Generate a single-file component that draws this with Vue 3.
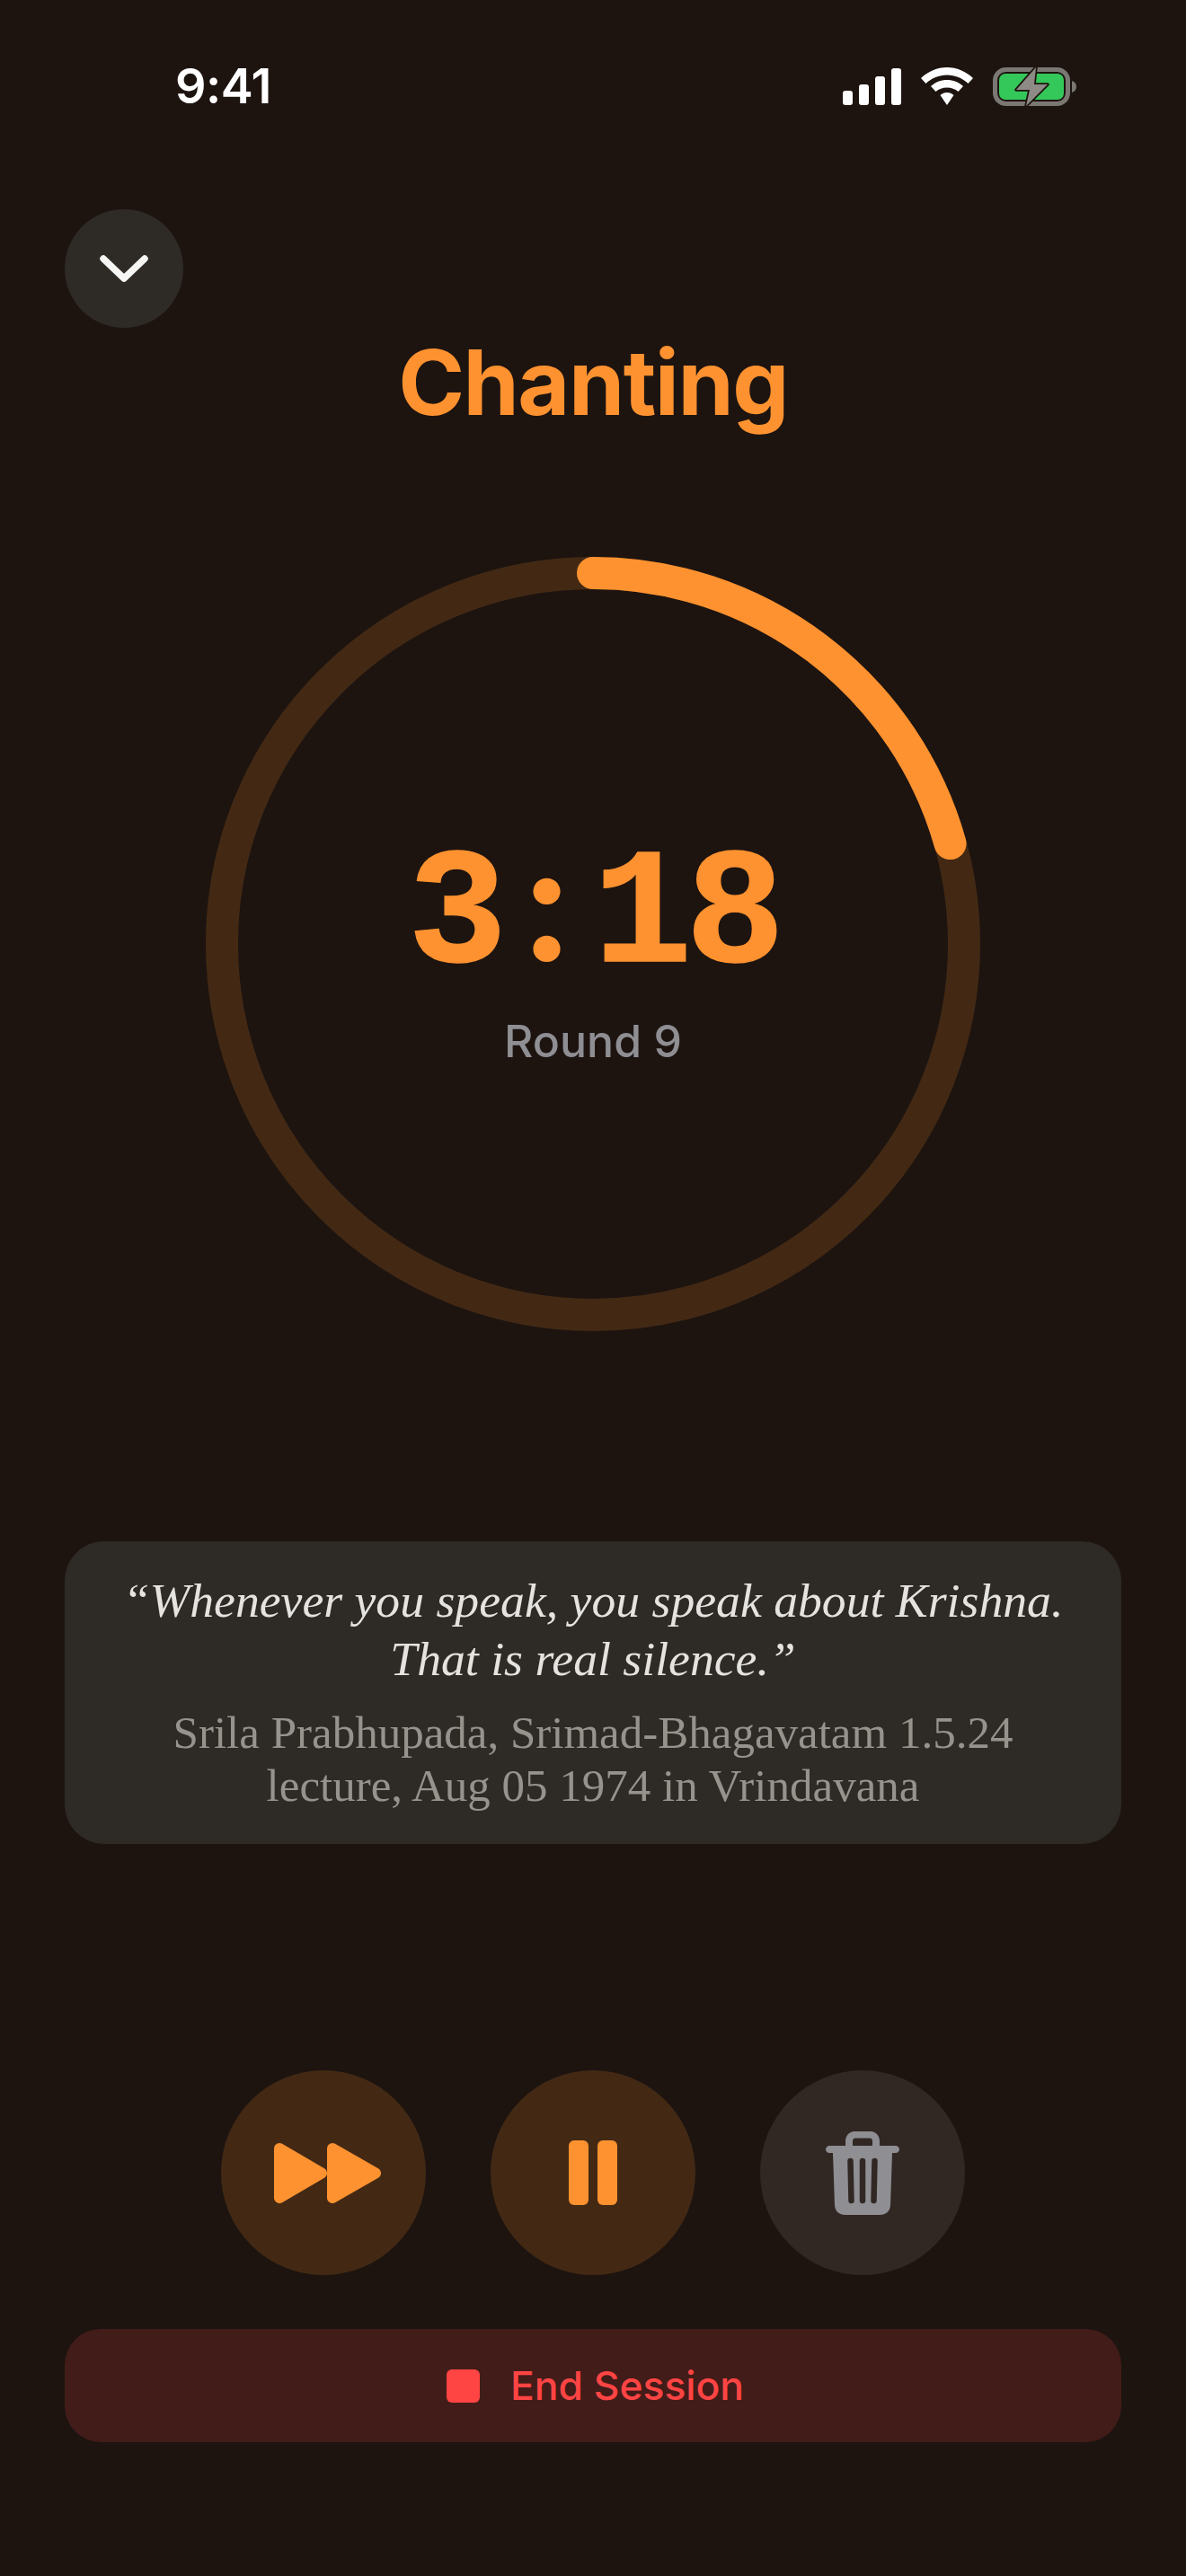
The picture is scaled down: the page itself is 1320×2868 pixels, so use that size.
<script setup>
const quote = ['“Whenever you speak, you speak about Krishna.', 'That is real silence.”']
const source = ['Srila Prabhupada, Srimad-Bhagavatam 1.5.24', 'lecture, Aug 05 1974 in Vrindavana']
const radius = 413
const circumference = 2 * Math.PI * radius
const progress = 198 / 960
const dash = `${circumference * progress} ${circumference}`
</script>

<template>
  <div class="screen">
    <div class="status">
      <span class="time">9:41</span>
      <div class="status-icons">
        <div class="signal"><i class="b1"></i><i class="b2"></i><i class="b3"></i><i class="b4"></i></div>
        <svg class="wifi" width="58" height="42" viewBox="0 0 58 42">
          <path d="M29 0C18 0 8 4.500 0 12L5.500 18C12 12 20 8.500 29 8.500S46 12 52.500 18L58 12C50 4.500 40 0 29 0Z" fill="#fff"/>
          <path d="M29 14C22 14 16 16.500 11 21L16.500 27C20 24 24 22.500 29 22.500S38 24 41.500 27L47 21C42 16.500 36 14 29 14Z" fill="#fff"/>
          <path d="M29 28C26 28 23.500 29 21.500 31L29 42L36.500 31C34.500 29 32 28 29 28Z" fill="#fff"/>
        </svg>
        <svg class="battery" width="93" height="45" viewBox="0 0 93 45">
          <rect x="2.500" y="3.500" width="81" height="38" rx="12" fill="none" stroke="#7b7772" stroke-width="5"/>
          <rect x="7" y="8" width="72" height="29" rx="7" fill="#34c759"/>
          <path d="M88 16c3 1 5 3 5 6.500s-2 5.500-5 6.500Z" fill="#7b7772"/>
          <path d="M48 1 26 26H41L37 44 61 20H46Z" fill="#8e8a85" stroke="#1d1410" stroke-width="3.500" stroke-linejoin="round" paint-order="stroke"/>
        </svg>
      </div>
    </div>

    <button class="back" type="button" aria-label="Close">
      <svg width="56" height="34" viewBox="0 0 56 34"><path d="M5 6 28 28 51 6" fill="none" stroke="#f5f5f3" stroke-width="7.500" stroke-linecap="round" stroke-linejoin="round"/></svg>
    </button>

    <h1 class="title">Chanting</h1>

    <div class="ring">
      <svg width="862" height="862" viewBox="0 0 862 862">
        <circle cx="431" cy="431" :r="radius" fill="none" stroke="#432914" stroke-width="36"/>
        <circle cx="431" cy="431" :r="radius" fill="none" stroke="#ff9230" stroke-width="36" stroke-linecap="round" :stroke-dasharray="dash" transform="rotate(-90 431 431)"/>
      </svg>
      <div class="ring-text">
        <div class="clock">3<span class="colon">:</span>18</div>
        <div class="round">Round 9</div>
      </div>
    </div>

    <div class="card">
      <p class="quote"><span v-for="l in quote" :key="l">{{ l }}</span></p>
      <p class="source"><span v-for="l in source" :key="l">{{ l }}</span></p>
    </div>

    <div class="controls">
      <button class="ctrl warm" type="button" aria-label="Skip">
        <svg class="skip" width="119" height="67" viewBox="0 0 119 67">
          <path d="M6 6 53 33.500 6 61Z" fill="#ff9230" stroke="#ff9230" stroke-width="12" stroke-linejoin="round"/>
          <path d="M65 6 113 33.500 65 61Z" fill="#ff9230" stroke="#ff9230" stroke-width="12" stroke-linejoin="round"/>
        </svg>
      </button>
      <button class="ctrl warm" type="button" aria-label="Pause">
        <svg width="54" height="72" viewBox="0 0 54 72">
          <rect x="0" y="0" width="22" height="72" rx="6" fill="#ff9230"/>
          <rect x="32" y="0" width="22" height="72" rx="6" fill="#ff9230"/>
        </svg>
      </button>
      <button class="ctrl grey" type="button" aria-label="Delete">
        <svg width="82" height="93" viewBox="0 0 82 93">
          <path fill-rule="evenodd" d="M22 16V11C22 5 26 0 32 0H50C56 0 60 5 60 11V16H78C80 16 82 18 82 20S80 24 78 24H74L72 82C71.700 89 67 93 60 93H22C15 93 10.300 89 10 82L8 24H4C2 24 0 22 0 20S2 16 4 16ZM30 16H52V11C52 9 51 7.500 49 7.500H33C31 7.500 30 9 30 11Z" fill="#8e8e93"/>
          <path d="M27.500 33 28.500 77M41 33V77M54.500 33 53.500 77" fill="none" stroke="#312824" stroke-width="6.500" stroke-linecap="round"/>
        </svg>
      </button>
    </div>

    <button class="end" type="button">
      <i class="stop"></i>
      <span>End Session</span>
    </button>
  </div>
</template>

<style>
html, body { margin: 0; background: #1d1410; }
</style>

<style scoped>
.screen {
  width: 1320px;
  height: 2868px;
  background: #1d1410;
  display: flex;
  flex-direction: column;
  font-family: Inter, "Liberation Sans", sans-serif;
  overflow: hidden;
}
button { border: 0; padding: 0; font: inherit; }
.status {
  height: 56px;
  padding: 68px 122px 0 195px;
  display: flex;
  justify-content: space-between;
  align-items: center;
}
.time { font-size: 54px; font-weight: 600; color: #fff; letter-spacing: -0.5px; line-height: 56px; }
.status-icons { display: flex; align-items: center; gap: 22px; }
.signal { display: flex; align-items: flex-end; gap: 7px; height: 41px; }
.signal i { width: 11px; background: #fff; border-radius: 3px; display: block; }
.b1 { height: 16px; }
.b2 { height: 23px; }
.b3 { height: 32px; }
.b4 { height: 41px; }
.back {
  width: 132px;
  height: 132px;
  margin: 109px 0 0 72px;
  border-radius: 50%;
  background: #2e2a26;
  display: flex;
  align-items: center;
  justify-content: center;
}
.title {
  margin: 3px 0 0;
  text-align: center;
  font-size: 100px;
  line-height: 116px;
  font-weight: 700;
  color: #ff9230;
  letter-spacing: -1.500px;
}
.ring {
  position: relative;
  width: 862px;
  height: 862px;
  margin: 136px auto 0;
}
.ring svg { display: block; }
.ring-text {
  position: absolute;
  inset: 0;
  padding-top: 22px;
  box-sizing: border-box;
  display: flex;
  flex-direction: column;
  align-items: center;
  justify-content: center;
}
.clock {
  font-family: "Liberation Mono", monospace;
  font-size: 184px;
  font-weight: 700;
  line-height: 170px;
  letter-spacing: -7.500px;
  color: #ff9230;
  -webkit-text-stroke: 1.500px #ff9230;
}
.colon {
  display: inline-block;
  width: 103px;
  text-align: center;
  font-family: Lato, "Open Sans", sans-serif;
  font-weight: 900;
  letter-spacing: 0;
  line-height: 0;
  -webkit-text-stroke: 0;
}
.round { margin-top: 24px; font-size: 50px; line-height: 58px; font-weight: 500; color: #8e8e93; }
.card {
  margin: 234px 72px 0;
  height: 337px;
  box-sizing: border-box;
  padding: 34px 20px 0;
  border-radius: 44px;
  background: #2e2a26;
  text-align: center;
  font-family: "Liberation Serif", serif;
}
.quote, .source { margin: 0; }
.quote span, .source span { display: block; }
.quote { font-style: italic; font-size: 53.700px; line-height: 65px; color: #e5e3df; }
.source { margin-top: 20px; font-size: 51px; line-height: 59px; color: #96928c; }
.controls { display: flex; justify-content: center; gap: 72px; margin-top: 252px; }
.ctrl { width: 228px; height: 228px; border-radius: 50%; display: flex; align-items: center; justify-content: center; }
.skip { margin-left: 9px; }
.warm { background: #432914; }
.grey { background: #312824; }
.end {
  margin: 60px 72px 0;
  height: 126px;
  padding-left: 5px;
  border-radius: 40px;
  background: #421c18;
  color: #ff4444;
  display: flex;
  align-items: center;
  justify-content: center;
  gap: 34px;
  font-size: 44.400px;
  font-weight: 500;
}
.stop { width: 37px; height: 37px; border-radius: 6px; background: #ff4444; display: block; }
</style>
